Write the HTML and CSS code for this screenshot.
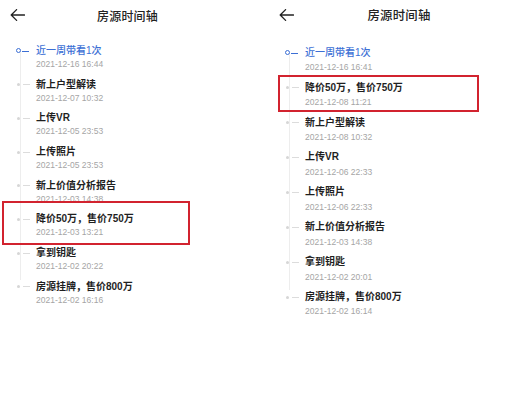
FILE: index.html
```html
<!DOCTYPE html>
<html lang="zh-CN">
<head>
  <meta charset="UTF-8"/>
  <meta name="viewport" content="width=device-width, initial-scale=1.0"/>
  <title>房源时间轴</title>
  <link rel="stylesheet" href="styles.css">
</head>
<body>
  <div class="screens">
    <!-- 左：修改前 -->
    <section class="screen screen-before">
      <div class="bar">
        <svg class="back" viewBox="0 0 15 12" width="15" height="12"><path d="M14.5 6H1.2M6.6 0.6L1.2 6l5.4 5.4"/></svg>
        <div class="bar-title">房源时间轴</div>
      </div>
      <ul class="timeline">
        <li class="event is-latest"><span class="node"></span><div class="event-title">近一周带看1次</div><div class="event-time">2021-12-16 16:44</div></li>
        <li class="event"><span class="node"></span><div class="event-title">新上户型解读</div><div class="event-time">2021-12-07 10:32</div></li>
        <li class="event"><span class="node"></span><div class="event-title">上传VR</div><div class="event-time">2021-12-05 23:53</div></li>
        <li class="event"><span class="node"></span><div class="event-title">上传照片</div><div class="event-time">2021-12-05 23:53</div></li>
        <li class="event"><span class="node"></span><div class="event-title">新上价值分析报告</div><div class="event-time">2021-12-03 14:38</div></li>
        <li class="event is-marked"><span class="node"></span><div class="event-title">降价50万，售价750万</div><div class="event-time">2021-12-03 13:21</div></li>
        <li class="event"><span class="node"></span><div class="event-title">拿到钥匙</div><div class="event-time">2021-12-02 20:22</div></li>
        <li class="event"><span class="node"></span><div class="event-title">房源挂牌，售价800万</div><div class="event-time">2021-12-02 16:16</div></li>
      </ul>
    </section>

    <!-- 右：修改后 -->
    <section class="screen screen-after">
      <div class="bar">
        <svg class="back" viewBox="0 0 15 12" width="15" height="12"><path d="M14.5 6H1.2M6.6 0.6L1.2 6l5.4 5.4"/></svg>
        <div class="bar-title">房源时间轴</div>
      </div>
      <ul class="timeline">
        <li class="event is-latest"><span class="node"></span><div class="event-title">近一周带看1次</div><div class="event-time">2021-12-16 16:41</div></li>
        <li class="event is-marked"><span class="node"></span><div class="event-title">降价50万，售价750万</div><div class="event-time">2021-12-08 11:21</div></li>
        <li class="event"><span class="node"></span><div class="event-title">新上户型解读</div><div class="event-time">2021-12-08 10:32</div></li>
        <li class="event"><span class="node"></span><div class="event-title">上传VR</div><div class="event-time">2021-12-06 22:33</div></li>
        <li class="event"><span class="node"></span><div class="event-title">上传照片</div><div class="event-time">2021-12-06 22:33</div></li>
        <li class="event"><span class="node"></span><div class="event-title">新上价值分析报告</div><div class="event-time">2021-12-03 14:38</div></li>
        <li class="event"><span class="node"></span><div class="event-title">拿到钥匙</div><div class="event-time">2021-12-02 20:01</div></li>
        <li class="event"><span class="node"></span><div class="event-title">房源挂牌，售价800万</div><div class="event-time">2021-12-02 16:14</div></li>
      </ul>
    </section>
  </div>
</body>
</html>
```

FILE: styles.css
```css
body {
  margin: 0;
  background: #fff;
  font-family: "Liberation Sans", "Noto Sans CJK SC", sans-serif;
  color: #1f1f1f;
}
.screens {
  display: flex;
  gap: 13px;
  width: 530px;
  height: 400px;
  overflow: hidden;
}
.screen {
  width: 255px;
  /* valeurs du panneau gauche, surchargées à droite */
  --step: 6.7px;
  --title-lh: 14px;
  --time-lh: 13px;
}
.screen-after {
  width: 262px;
  --step: 6.4px;
  --title-lh: 14.5px;
  --time-lh: 14px;
}

/* BARRE DU HAUT */
.bar {
  display: grid;
  grid-template-columns: 1fr auto 1fr;
  align-items: center;
  height: 30px;
}
.back {
  justify-self: start;
  margin-left: 10px;
  fill: none;
  stroke: #222;
  stroke-width: 1.3;
  stroke-linecap: round;
  stroke-linejoin: round;
}
.screen-after .back {
  margin-left: 11px;
}
.bar-title {
  font-size: 12px;
  font-weight: 500;
  color: #222;
  letter-spacing: 0.2px;
}
.screen-after .bar-title {
  font-size: 12.4px;
}

/* TIMELINE */
.timeline {
  list-style: none;
  margin: 0;
  padding: 14px 0 0;
  position: relative;
}
.screen-after .timeline {
  padding-top: 15.75px;
}
.timeline::before {
  content: "";
  position: absolute;
  left: 20px;
  top: 21px;
  bottom: 27px;
  width: 1px;
  background: #ededed;
}
.screen-after .timeline::before {
  left: 20.5px;
  top: 23px;
  bottom: 28px;
}
.event {
  position: relative;
  padding-left: 36px;
  margin-bottom: var(--step);
}
.screen-after .event {
  padding-left: 37px;
}
.event-title {
  font-size: 10px;
  font-weight: 700;
  line-height: var(--title-lh);
  white-space: nowrap;
}
.event-time {
  font-size: 8.5px;
  line-height: var(--time-lh);
  color: #a5a5a5;
  white-space: nowrap;
}
.is-latest .event-title {
  color: #3c6fd5;
  font-weight: 500;
}

/* point + tiret sur la ligne */
.node::before,
.node::after {
  content: "";
  position: absolute;
}
.node::before {
  left: 17px;
  top: calc(var(--title-lh) / 2 - 1.5px);
  width: 3px;
  height: 3px;
  border-radius: 50%;
  background: #d6d6d6;
}
.node::after {
  left: 23px;
  top: calc(var(--title-lh) / 2 - 0.5px);
  width: 7px;
  height: 1px;
  background: #dcdcdc;
}
.screen-after .node::before { left: 18px; }
.screen-after .node::after { left: 24px; }
.is-latest .node::before {
  left: 15.5px;
  top: calc(var(--title-lh) / 2 - 3px);
  width: 3.4px;
  height: 3.4px;
  border: 1.3px solid #3c6fd5;
  background: #fff;
}
.is-latest .node::after {
  left: 21.5px;
  width: 7px;
  background: #3c6fd5;
}
.screen-after .is-latest .node::before { left: 16.5px; }
.screen-after .is-latest .node::after { left: 22.5px; }

/* cadre rouge d'annotation */
.is-marked::after {
  content: "";
  position: absolute;
  left: 2px;
  top: -11.5px;
  width: 184px;
  height: 40px;
  border: 2px solid #d2232f;
}
.screen-after .is-marked::after {
  left: 10px;
  top: -5.6px;
  width: 197px;
  height: 33px;
}
```
